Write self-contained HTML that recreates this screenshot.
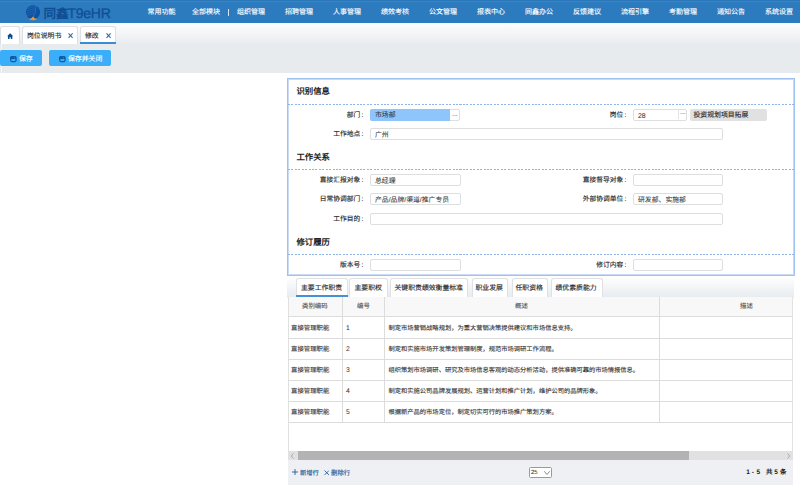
<!DOCTYPE html>
<html lang="zh-CN"><head><meta charset="utf-8">
<style>
*{box-sizing:border-box;margin:0;padding:0}
html,body{width:800px;height:488px;overflow:hidden;background:#fff;font-family:"Liberation Sans",sans-serif;color:#333;text-rendering:geometricPrecision}
.a{position:absolute;white-space:nowrap}
.s{-webkit-text-stroke:0.15px currentColor}
#hdr{position:absolute;left:0;top:0;width:800px;height:23px;background:linear-gradient(#2a77b9 0,#2a77b9 1px,#3286c9 1px,#3286c9 2px,#2d7bbf 2px)}
.mn{position:absolute;top:8px;font-size:7px;line-height:9px;color:#fff;white-space:nowrap;-webkit-text-stroke:0.12px #fff}
#tabbar{position:absolute;left:0;top:23px;width:800px;height:21px;background:linear-gradient(#fdfdfe,#e9ecef)}
.tb{position:absolute;top:26px;height:18px;background:#fff;border:1px solid #dcdfe3;border-bottom:none;border-radius:3px 3px 0 0}
.tt{position:absolute;top:32px;font-size:6.85px;line-height:9px;color:#2a2a2a;white-space:nowrap;-webkit-text-stroke:0.15px #2a2a2a}
#tool{position:absolute;left:0;top:44px;width:800px;height:29px;background:#e8ebee}
.btn{position:absolute;top:50px;height:16px;background:#3aaef9;border-radius:2px;box-shadow:0 0 0 0.6px #f3ece8}
.bt{position:absolute;top:55px;font-size:6.85px;line-height:9px;color:#fff;white-space:nowrap;-webkit-text-stroke:0.15px #fff}
#form{position:absolute;left:287px;top:78px;width:507.5px;height:198px;border:1px solid #a0c1ee;box-shadow:inset 0 0 0 1px #cadcf5}
.sec{position:absolute;font-size:8.4px;line-height:10px;font-weight:bold;color:#222;white-space:nowrap}
.dash{position:absolute;left:288px;width:506px;height:1px;background:repeating-linear-gradient(90deg,#8fb6e8 0 2px,transparent 2px 3.43px)}
.lb{position:absolute;font-size:6.75px;line-height:9px;color:#222;text-align:right;white-space:nowrap;-webkit-text-stroke:0.12px #222}
.in{position:absolute;height:12px;border:1px solid #dddee0;border-radius:2px;background:#fff;font-size:6.85px;line-height:10px;padding-left:4px;padding-top:2px;color:#333;white-space:nowrap;-webkit-text-stroke:0.06px #333}
.ltb{position:absolute;top:278px;height:19px;background:#fff;border:1px solid #dfe1e4;border-bottom:none;border-radius:3px 3px 0 0}
.ltt{position:absolute;top:284px;font-size:6.85px;line-height:9px;color:#2a2a2a;white-space:nowrap;-webkit-text-stroke:0.15px #2a2a2a}
i{font-style:normal;padding-left:1.3px}
.pg{top:468px;font-size:6.5px;line-height:9px;color:#222;font-weight:bold}
.hl{position:absolute;left:288px;width:505px;height:1px;background:#dcdcdc}
.vl{position:absolute;top:297px;width:1px;height:126px;background:#dcdcdc}
.ct{position:absolute;font-size:6.28px;line-height:9px;color:#333;white-space:nowrap;-webkit-text-stroke:0.1px #333}
</style></head><body>
<div id="hdr"></div>
<!-- logo -->
<svg class="a" style="left:25px;top:5px" width="16" height="16" viewBox="0 0 16 16">
<circle cx="8" cy="7.2" r="7" fill="#0c53a2"/>
<path d="M2.2 3.6 Q5 2.3 9.8 1.6 M1.3 6 Q5 4.3 10.3 3.6 M1.2 8.4 Q5 6.5 10.2 5.8 M2 10.8 Q5.5 9 9.6 8.2" fill="none" stroke="#2a6cb6" stroke-width="0.7"/>
<path d="M10.8 1 Q11.8 7 8 12.5" fill="none" stroke="#3a7cc4" stroke-width="0.6"/>
<path d="M3.8 14.3 Q6.5 13.8 8 11.5 Q9.5 13.8 12.3 14.3 Q8 16.2 3.8 14.3Z" fill="#f7921c"/>
</svg>
<div class="a" style="left:43.5px;top:6px;font-size:12.6px;line-height:16px;font-weight:bold;color:#0f4e94">同鑫</div>
<div class="a" style="left:67.5px;top:4px;font-size:14px;line-height:18px;letter-spacing:-0.25px;color:#0f4e94;-webkit-text-stroke:0.3px #0f4e94">T9eHR</div>
<div class="mn" style="left:147.5px">常用功能</div>
<div class="mn" style="left:192px">全部模块</div>
<div class="a" style="left:228px;top:9px;width:1px;height:7px;background:#d6e6f4"></div>
<div class="mn" style="left:237px">组织管理</div>
<div class="mn" style="left:285px">招聘管理</div>
<div class="mn" style="left:333px">人事管理</div>
<div class="mn" style="left:381px">绩效考核</div>
<div class="mn" style="left:429px">公文管理</div>
<div class="mn" style="left:477px">报表中心</div>
<div class="mn" style="left:525px">同鑫办公</div>
<div class="mn" style="left:573px">反馈建议</div>
<div class="mn" style="left:621px">流程引擎</div>
<div class="mn" style="left:669px">考勤管理</div>
<div class="mn" style="left:717px">通知公告</div>
<div class="mn" style="left:765px">系统设置</div>

<div id="tabbar"></div>
<div class="tb" style="left:0;width:19.5px"></div>
<svg class="a" style="left:6.5px;top:32.5px" width="6.3" height="6.3" viewBox="0 0 7 7"><path d="M3.5 0.3 L6.9 3.6 L5.9 3.6 L5.9 6.6 L4.2 6.6 L4.2 4.8 L2.8 4.8 L2.8 6.6 L1.1 6.6 L1.1 3.6 L0.1 3.6Z" fill="#0c4a96"/></svg>
<div class="tb" style="left:22px;width:55.5px"></div>
<div class="tt" style="left:27px">岗位说明书</div>
<svg class="a" style="left:68px;top:33px" width="5" height="6" viewBox="0 0 5 6"><path d="M0.5 0.4L4.6 4.9M4.6 0.4L0.5 4.9" stroke="#2f66aa" stroke-width="1.05"/></svg>
<div class="tb" style="left:80px;width:35.5px"></div>
<div class="a" style="left:80px;top:42px;width:35.5px;height:2px;background:#3d8bd3"></div>
<div class="tt" style="left:85px">修改</div>
<svg class="a" style="left:105.5px;top:33px" width="5" height="6" viewBox="0 0 5 6"><path d="M0.5 0.4L4.6 4.9M4.6 0.4L0.5 4.9" stroke="#2f66aa" stroke-width="1.05"/></svg>

<div id="tool"></div>
<div class="a" style="left:1px;top:44px;width:1px;height:29px;background:#f6f7f8"></div>
<div class="btn" style="left:0;width:41.5px"></div>
<svg class="a" style="left:10px;top:56px" width="7" height="7" viewBox="0 0 7 7"><rect x="0.65" y="0.65" width="5.4" height="4.9" rx="1.2" fill="none" stroke="#0e5aa2" stroke-width="1.2"/><rect x="0.65" y="0.65" width="5.4" height="2.4" fill="#0e5aa2"/><rect x="3.9" y="1.1" width="0.8" height="1.2" fill="#2f8fd8"/></svg>
<div class="bt" style="left:19px">保存</div>
<div class="btn" style="left:49px;width:61.5px"></div>
<svg class="a" style="left:59px;top:56px" width="7" height="7" viewBox="0 0 7 7"><rect x="0.65" y="0.65" width="5.4" height="4.9" rx="1.2" fill="none" stroke="#0e5aa2" stroke-width="1.2"/><rect x="0.65" y="0.65" width="5.4" height="2.4" fill="#0e5aa2"/><rect x="3.9" y="1.1" width="0.8" height="1.2" fill="#2f8fd8"/></svg>
<div class="bt" style="left:68px">保存并关闭</div>

<div id="form"></div>
<div class="sec" style="left:296.5px;top:86px">识别信息</div>
<div class="dash" style="top:104px"></div>
<div class="lb" style="left:300px;width:63.5px;top:111px">部门<i>:</i></div>
<div class="in" style="left:370px;top:109px;width:90px;padding:0"><div style="position:absolute;left:-1px;top:-1px;width:79.5px;height:12px;background:#8ec5fb;border-radius:2px 0 0 2px"></div><span class="a" style="left:4px;top:1px">市场部</span><span class="a" style="left:81px;top:0px;color:#555">...</span></div>
<div class="lb" style="left:540px;width:86.5px;top:111px">岗位<i>:</i></div>
<div class="in" style="left:633px;top:109px;width:54px">28<span class="a" style="left:46px;top:-2px;color:#555">...</span><div class="a" style="left:44px;top:-1px;width:1px;height:10px;background:#e2e4e7"></div></div>
<div class="a s" style="left:689.5px;top:109px;width:77px;height:12px;background:#e1e1e1;border-radius:2px;font-size:6.85px;line-height:14px;padding-left:4px;color:#2a2a2a">投资规划项目拓展</div>
<div class="lb" style="left:300px;width:63.5px;top:130px">工作地点<i>:</i></div>
<div class="in" style="left:370px;top:128px;width:352.5px">广州</div>

<div class="sec" style="left:296.5px;top:152px">工作关系</div>
<div class="dash" style="top:169px"></div>
<div class="lb" style="left:300px;width:63.5px;top:176px">直接汇报对象<i>:</i></div>
<div class="in" style="left:370px;top:174px;width:90.5px">总经理</div>
<div class="lb" style="left:540px;width:86.5px;top:176px">直接督导对象<i>:</i></div>
<div class="in" style="left:633px;top:174px;width:90px"></div>
<div class="lb" style="left:300px;width:63.5px;top:195px">日常协调部门<i>:</i></div>
<div class="in" style="left:370px;top:193px;width:90.5px">产品/品牌/渠道/推广专员</div>
<div class="lb" style="left:540px;width:86.5px;top:195px">外部协调单位<i>:</i></div>
<div class="in" style="left:633px;top:193px;width:90px">研发部、实施部</div>
<div class="lb" style="left:300px;width:63.5px;top:215px">工作目的<i>:</i></div>
<div class="in" style="left:370px;top:213px;width:352.5px"></div>

<div class="sec" style="left:296.5px;top:237px">修订履历</div>
<div class="dash" style="top:254px"></div>
<div class="lb" style="left:300px;width:63.5px;top:261px">版本号<i>:</i></div>
<div class="in" style="left:370px;top:259px;width:90.5px"></div>
<div class="lb" style="left:540px;width:86.5px;top:261px">修订内容<i>:</i></div>
<div class="in" style="left:633px;top:259px;width:90px"></div>

<!-- lower tabs -->
<div class="a" style="left:287px;top:276px;width:506.5px;height:22px;background:linear-gradient(#fff,#e7ebef)"></div>
<div class="ltb" style="left:296px;width:51.5px"></div>
<div class="a" style="left:296px;top:295px;width:51.5px;height:1.5px;background:#4690d5"></div>
<div class="ltt" style="left:301px">主要工作职责</div>
<div class="ltb" style="left:349px;width:38.5px"></div>
<div class="ltt" style="left:354.5px">主要职权</div>
<div class="ltb" style="left:390px;width:77.5px"></div>
<div class="ltt" style="left:394.5px">关键职责绩效衡量标准</div>
<div class="ltb" style="left:471.5px;width:36.5px"></div>
<div class="ltt" style="left:475.5px">职业发展</div>
<div class="ltb" style="left:511.5px;width:36.5px"></div>
<div class="ltt" style="left:515.5px">任职资格</div>
<div class="ltb" style="left:551px;width:51.5px"></div>
<div class="ltt" style="left:555.5px">绩优素质能力</div>

<!-- table -->
<div class="a" style="left:288px;top:297px;width:505px;height:19px;background:#f8f8f8"></div>
<div class="a" style="left:288px;top:297px;width:1px;height:154px;background:#e0e0e0"></div>
<div class="a" style="left:792px;top:297px;width:1px;height:154px;background:#e3e3e3"></div>
<div class="hl" style="top:316px"></div>
<div class="hl" style="top:338px"></div>
<div class="hl" style="top:359px"></div>
<div class="hl" style="top:380px"></div>
<div class="hl" style="top:401px"></div>
<div class="hl" style="top:422px"></div>
<div class="vl" style="left:342px"></div>
<div class="vl" style="left:384px"></div>
<div class="vl" style="left:659px"></div>
<div class="ct" style="left:302px;top:302px;font-size:6.4px;color:#555;-webkit-text-stroke:0.1px #555">类别编码</div>
<div class="ct" style="left:357px;top:302px;font-size:6.4px;color:#555;-webkit-text-stroke:0.1px #555">编号</div>
<div class="ct" style="left:515px;top:302px;font-size:6.4px;color:#555;-webkit-text-stroke:0.1px #555">概述</div>
<div class="ct" style="left:740px;top:302px;font-size:6.4px;color:#555;-webkit-text-stroke:0.1px #555">描述</div>

<div class="ct" style="left:291px;top:324px;font-size:6.38px">直接管理职能</div>
<div class="ct" style="left:346px;top:324px;font-size:6.8px;letter-spacing:0;-webkit-text-stroke:0;color:#333">1</div>
<div class="ct" style="left:388.5px;top:324px">制定市场营销战略规划，为重大营销决策提供建议和市场信息支持。</div>
<div class="ct" style="left:291px;top:345px;font-size:6.38px">直接管理职能</div>
<div class="ct" style="left:346px;top:345px;font-size:6.8px;letter-spacing:0;-webkit-text-stroke:0;color:#333">2</div>
<div class="ct" style="left:388.5px;top:345px">制定和实施市场开发策划管理制度，规范市场调研工作流程。</div>
<div class="ct" style="left:291px;top:366px;font-size:6.38px">直接管理职能</div>
<div class="ct" style="left:346px;top:366px;font-size:6.8px;letter-spacing:0;-webkit-text-stroke:0;color:#333">3</div>
<div class="ct" style="left:388.5px;top:366px">组织策划市场调研、研究及市场信息客观的动态分析活动，提供准确可靠的市场情报信息。</div>
<div class="ct" style="left:291px;top:387px;font-size:6.38px">直接管理职能</div>
<div class="ct" style="left:346px;top:387px;font-size:6.8px;letter-spacing:0;-webkit-text-stroke:0;color:#333">4</div>
<div class="ct" style="left:388.5px;top:387px">制定和实施公司品牌发展规划、运营计划和推广计划，维护公司的品牌形象。</div>
<div class="ct" style="left:291px;top:408px;font-size:6.38px">直接管理职能</div>
<div class="ct" style="left:346px;top:408px;font-size:6.8px;letter-spacing:0;-webkit-text-stroke:0;color:#333">5</div>
<div class="ct" style="left:388.5px;top:408px">根据新产品的市场定位，制定切实可行的市场推广策划方案。</div>

<!-- scrollbar -->
<div class="a" style="left:288px;top:451px;width:505px;height:9px;background:#e1e1e1"></div>
<div class="a" style="left:297.5px;top:451px;width:391.5px;height:9px;background:#b3b3b3"></div>
<svg class="a" style="left:290px;top:452.5px" width="5" height="6" viewBox="0 0 5 6"><path d="M3.5 0.5L1.2 3L3.5 5.5" fill="none" stroke="#9a9a9a" stroke-width="0.8"/></svg>
<svg class="a" style="left:786px;top:452.5px" width="5" height="6" viewBox="0 0 5 6"><path d="M1.5 0.5L3.8 3L1.5 5.5" fill="none" stroke="#9a9a9a" stroke-width="0.8"/></svg>
<!-- footer -->
<div class="a" style="left:288px;top:460px;width:505px;height:25px;background:#eef0f4"></div>
<svg class="a" style="left:291.5px;top:469px" width="6" height="6" viewBox="0 0 6 6"><path d="M3 0V6M0 3H6" stroke="#1f5d9f" stroke-width="0.9"/></svg>
<div class="a s" style="left:300px;top:469px;font-size:6.25px;line-height:9px;color:#1c5b9e">新增行</div>
<svg class="a" style="left:323.5px;top:470px" width="5.5" height="5.5" viewBox="0 0 5 5"><path d="M0.5 0.5L4.5 4.5M4.5 0.5L0.5 4.5" stroke="#1c5b9e" stroke-width="0.8"/></svg>
<div class="a s" style="left:331px;top:469px;font-size:6.4px;line-height:9px;color:#1c5b9e">删除行</div>
<div class="a" style="left:528.5px;top:467px;width:23.5px;height:10.5px;background:#fff;border:1px solid #9a9a9a;border-radius:1.5px"></div>
<div class="a" style="left:531px;top:469px;font-size:6px;line-height:9px;color:#222">25</div>
<svg class="a" style="left:543.5px;top:470.5px" width="6" height="4" viewBox="0 0 6 4"><path d="M0.3 0.3L3 3.5L5.7 0.3" fill="none" stroke="#555" stroke-width="0.7"/></svg>
<div class="a pg" style="left:746.3px">1</div><div class="a pg" style="left:751.8px">-</div><div class="a pg" style="left:756.5px">5</div><div class="a pg" style="left:766px">共</div><div class="a pg" style="left:774.2px">5</div><div class="a pg" style="left:780px">条</div>
</body></html>
